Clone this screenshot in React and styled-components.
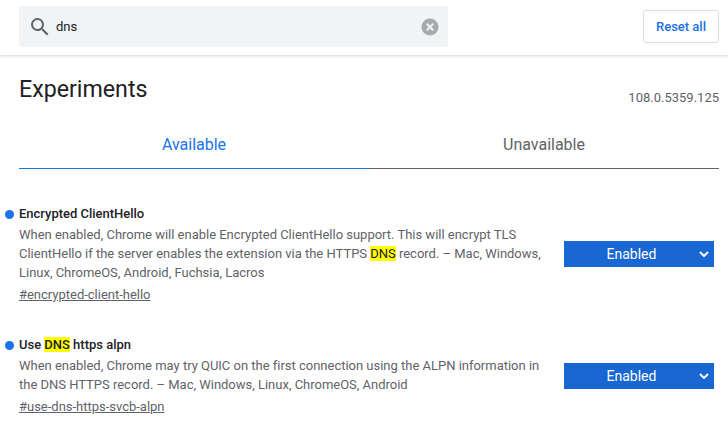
import React from 'react';
import styled, { createGlobalStyle } from 'styled-components';

const GlobalStyle = createGlobalStyle`
    html, body {
        margin: 0;
        background: #fff;
        font-family: Roboto, "Liberation Sans", sans-serif;
    }
    body {
        height: 435px;
        overflow: hidden;
    }
`;

const Header = styled.header`
    height: 55px;
    box-sizing: border-box;
    padding: 6px 9px 0 19px;
    display: flex;
    justify-content: space-between;
    align-items: flex-start;
    box-shadow: 0 1px 3px rgba(60, 64, 67, 0.22);
`;
const SearchBox = styled.div`
    position: relative;
    width: 429px;
    height: 41px;
    box-sizing: border-box;
    padding-left: 9px;
    display: flex;
    align-items: center;
    background: #f1f3f4;
    border-radius: 3px;
`;
const SearchText = styled.span`
    margin-left: 4px;
    font-size: 13px;
    color: #202124;
`;
const ClearIcon = styled.svg`
    position: absolute;
    right: 9px;
    top: 12px;
`;
const ResetButton = styled.button`
    width: 76px;
    height: 33px;
    margin-top: 4px;
    padding: 0;
    background: #fff;
    border: 1px solid #dadce0;
    border-radius: 3px;
    color: #1a73e8;
    font-family: Roboto, sans-serif;
    font-size: 13px;
    font-weight: 500;
`;
const Main = styled.main`
    padding: 0 9px 0 19px;
`;
const TitleRow = styled.div`
    display: flex;
    justify-content: space-between;
    align-items: flex-end;
    height: 50px;
`;
const Title = styled.h1`
    margin: 0 0 2px;
    font-size: 23.2px;
    line-height: 28px;
    font-weight: 400;
    color: #202124;
`;
const Version = styled.span`
    font-size: 13px;
    line-height: 15px;
    color: #5f6368;
`;
const Tabs = styled.div`
    display: flex;
    height: 64px;
    margin-bottom: 35px;
`;
const Tab = styled.div`
    flex: 1;
    height: 64px;
    box-sizing: border-box;
    padding-top: 31px;
    text-align: center;
    font-size: 16px;
    line-height: 18px;
    color: ${(p) => (p.$active ? '#1a73e8' : '#5f6368')};
    border-bottom: 1px solid ${(p) => (p.$active ? '#1a73e8' : '#5f6368')};
`;
const Experiment = styled.section`
    position: relative;
    display: flex;
    justify-content: space-between;
    align-items: center;
    padding-right: 5px;
    margin-bottom: 31px;
    &::before {
        content: '';
        position: absolute;
        left: -14px;
        top: 6px;
        width: 9px;
        height: 9px;
        border-radius: 50%;
        background: #1a73e8;
    }
`;
const Info = styled.div`
    font-size: 13px;
    line-height: 19px;
    letter-spacing: -0.012px;
    color: #5f6368;
`;
const ExperimentName = styled.h2`
    margin: 0 0 2px;
    font-size: 13px;
    line-height: 19px;
    font-weight: 500;
    color: #202124;
`;
const Line = styled.div`
    white-space: nowrap;
`;
const Permalink = styled.a`
    display: block;
    margin-top: 3px;
    color: #5f6368;
    text-decoration: underline;
`;
const Mark = styled.mark`
    background: #ffff00;
    color: #202124;
`;
const Select = styled.div`
    position: relative;
    width: 150px;
    height: 26px;
    box-sizing: border-box;
    padding-right: 15px;
    line-height: 26px;
    text-align: center;
    background: #1967d2;
    color: #fff;
    font-size: 14px;
    font-weight: 400;
`;
const Chevron = styled.svg`
    position: absolute;
    right: 5px;
    top: 10px;
`;

const experiments = [
    {
        title: ['Encrypted ClientHello'],
        lines: [
            ['When enabled, Chrome will enable Encrypted ClientHello support. This will encrypt TLS'],
            ['ClientHello if the server enables the extension via the HTTPS ', <Mark key="m">DNS</Mark>, ' record. – Mac, Windows,'],
            ['Linux, ChromeOS, Android, Fuchsia, Lacros'],
        ],
        link: '#encrypted-client-hello',
    },
    {
        title: ['Use ', <Mark key="m">DNS</Mark>, ' https alpn'],
        lines: [
            ['When enabled, Chrome may try QUIC on the first connection using the ALPN information in'],
            ['the DNS HTTPS record. – Mac, Windows, Linux, ChromeOS, Android'],
        ],
        link: '#use-dns-https-svcb-alpn',
    },
];

const App = () => {
    return (
        <>
            <GlobalStyle />
            <Header>
                <SearchBox>
                    <svg width="24" height="24" viewBox="0 0 24 24" fill="#5f6368">
                        <path d="M15.5 14h-.79l-.28-.27A6.47 6.47 0 0 0 16 9.5 6.5 6.5 0 1 0 9.5 16c1.61 0 3.09-.59 4.23-1.57l.27.28v.79l5 4.99L20.49 19l-4.99-5zm-6 0C7.01 14 5 11.99 5 9.5S7.01 5 9.5 5 14 7.01 14 9.5 11.99 14 9.5 14z" />
                    </svg>
                    <SearchText>dns</SearchText>
                    <ClearIcon width="18" height="18" viewBox="0 0 18 18">
                        <circle cx="9" cy="9" r="8.5" fill="#a8a9ab" />
                        <path d="M5.8 5.8l6.4 6.4M12.2 5.8l-6.4 6.4" stroke="#f1f3f4" strokeWidth="2" />
                    </ClearIcon>
                </SearchBox>
                <ResetButton>Reset all</ResetButton>
            </Header>
            <Main>
                <TitleRow>
                    <Title>Experiments</Title>
                    <Version>108.0.5359.125</Version>
                </TitleRow>
                <Tabs>
                    <Tab $active>Available</Tab>
                    <Tab>Unavailable</Tab>
                </Tabs>
                {experiments.map((item) => (
                    <Experiment key={item.link}>
                        <Info>
                            <ExperimentName>{item.title}</ExperimentName>
                            {item.lines.map((line, i) => (
                                <Line key={i}>{line}</Line>
                            ))}
                            <Permalink href={item.link}>{item.link}</Permalink>
                        </Info>
                        <Select>
                            Enabled
                            <Chevron width="10" height="6" viewBox="0 0 10 6">
                                <path d="M1 1l4 4 4-4" fill="none" stroke="#fff" strokeWidth="2" />
                            </Chevron>
                        </Select>
                    </Experiment>
                ))}
            </Main>
        </>
    );
};

export default App;
